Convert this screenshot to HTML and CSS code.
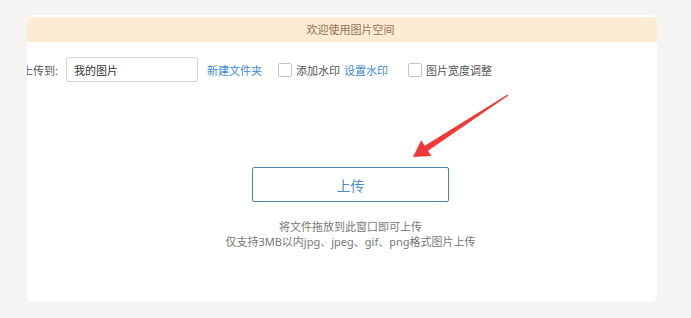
FILE: index.html
```html
<!DOCTYPE html>
<html lang="zh-CN">
<head>
    <meta charset="utf-8">
    <title>图片空间</title>
    <link rel="stylesheet" href="styles.css">
</head>
<body>
<div class="panel">
    <div class="panel__head">欢迎使用图片空间</div>
    <div class="toolbar">
        <span class="label">上传到:</span>
        <input class="input" value="我的图片">
        <a class="link link_folder">新建文件夹</a>
        <span class="checkbox"></span>
        <span class="label">添加水印</span>
        <a class="link link_mark">设置水印</a>
        <span class="checkbox"></span>
        <span class="label">图片宽度调整</span>
    </div>
    <div class="upload">
        <button class="button">上传</button>
        <div class="hint">
            <div>将文件拖放到此窗口即可上传</div>
            <div>仅支持3MB以内jpg、jpeg、gif、png格式图片上传</div>
        </div>
    </div>
</div>
<svg class="arrow" width="691" height="318" viewBox="0 0 691 318">
    <polygon fill="#ee3a36" points="413,157 431.5,156 428,150.7 508.4,95.6 507.6,94.4 424.8,145.7 421.2,140.3"/>
</svg>
</body>
</html>
```

FILE: styles.css
```css
body {
    margin: 0;
    padding: 0;
    background: #f5f4f2;
    font-family: 'Noto Sans', 'Noto Sans CJK SC', sans-serif;
    font-size: 11px;
    color: #555;
}

.panel {
    box-sizing: border-box;
    width: 630px;
    height: 287px;
    margin: 15px 0 0 27px;
    padding-top: 2px;
    background: #fff;
    border-radius: 6px;
    overflow: hidden;
}

.panel__head {
    height: 25px;
    line-height: 25px;
    padding-left: 17px;
    text-align: center;
    background: #fdebd4;
    color: #8f7252;
    border-radius: 5px 5px 0 0;
}

.toolbar {
    display: flex;
    align-items: center;
    margin: 15px 0 0 -5px;
    height: 25px;
}

.label {
    white-space: nowrap;
}

.input {
    box-sizing: border-box;
    width: 132px;
    height: 25px;
    margin-left: 8px;
    padding: 0 7px;
    border: 1px solid #d4d4d4;
    border-radius: 2px;
    outline: none;
    font-family: inherit;
    font-size: 11px;
    color: #333;
}

.link {
    color: #3a8ccf;
    cursor: pointer;
    white-space: nowrap;
}

.link_folder {
    margin: 0 16px 0 9px;
}

.link_mark {
    margin: 0 20px 0 4px;
}

.checkbox {
    box-sizing: border-box;
    width: 14px;
    height: 14px;
    margin-right: 4px;
    border: 1px solid #c4c4c4;
    border-radius: 2px;
    flex-shrink: 0;
}

.upload {
    display: flex;
    flex-direction: column;
    align-items: center;
    padding-left: 17px;
    margin-top: 85px;
}

.button {
    box-sizing: border-box;
    width: 197px;
    height: 35px;
    background: #fff;
    border: 1px solid #4f82ab;
    border-radius: 2px;
    font-family: inherit;
    font-size: 14px;
    color: #4a8fcb;
}

.hint {
    margin-top: 17px;
    text-align: center;
    line-height: 15px;
    color: #777;
}

.arrow {
    position: absolute;
    left: 0;
    top: 0;
    pointer-events: none;
}
```
